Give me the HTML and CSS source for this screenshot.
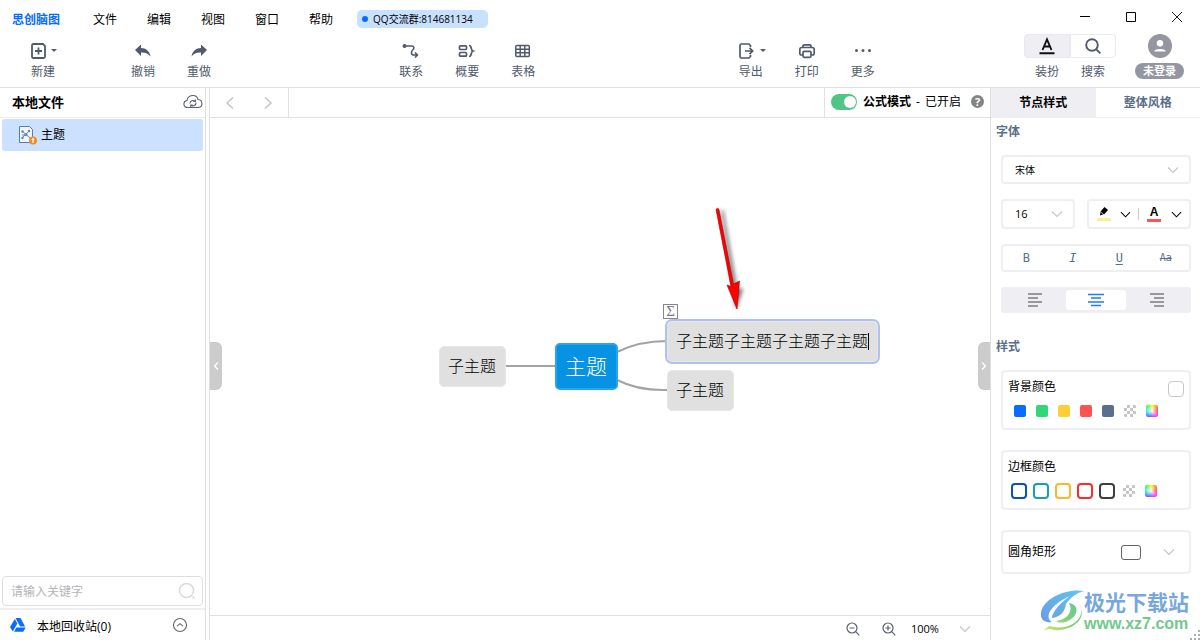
FILE: index.html
```html
<!DOCTYPE html>
<html lang="zh-CN">
<head>
<meta charset="utf-8">
<title>思创脑图</title>
<link rel="stylesheet" href="styles.css">
</head>
<body>
<svg class="defs" aria-hidden="true">
  <symbol id="chevron" viewBox="0 0 12 12"><path d="M1 3.5l5 5 5-5" fill="none" stroke="currentColor" stroke-width="1.1"/></symbol>
  <symbol id="checker" viewBox="0 0 12 12"><path d="M3 0h3v3h-3zM9 0h2l1 1v2h-3zM0 3h3v3h-3zM6 3h3v3h-3zM3 6h3v3h-3zM9 6h3v3h-3zM0 9h3v3h-2l-1-1zM6 9h3v3h-3z" fill="#c6c6c6"/></symbol>
</svg>
<header class="header">
  <nav class="menubar">
    <strong class="brand">思创脑图</strong>
    <div class="menus">
      <button>文件</button><button>编辑</button><button>视图</button><button>窗口</button><button>帮助</button>
    </div>
    <span class="chip">QQ交流群:814681134</span>
    <div class="window-controls">
      <button aria-label="最小化"><svg width="12" height="12" viewBox="0 0 12 12"><path d="M1 5.500h10" stroke="#000"/></svg></button>
      <button aria-label="最大化"><svg width="12" height="12" viewBox="0 0 12 12"><path d="M1.500 1.500h9v9h-9z" fill="none" stroke="#000"/></svg></button>
      <button aria-label="关闭"><svg width="12" height="12" viewBox="0 0 12 12"><path d="M1 1l10 10M11 1L1 11" fill="none" stroke="#222"/></svg></button>
    </div>
  </nav>
  <div class="toolbar">
    <div class="group">
      <button class="tool"><span class="tool-icon shifted"><svg width="16" height="18" viewBox="0 0 16 18" fill="none" stroke="currentColor" stroke-width="1.800"><path d="M2.500 2h9.500l2 2v10.500q0 1.500-1.500 1.500h-10q-1.500 0-1.500-1.500v-11q0-1.500 1.500-1.500zM7.500 5.500v7M4 9h7" /></svg><svg width="8" height="12" viewBox="0 0 8 12"><path d="M1 4h6l-3 3z" fill="currentColor"/></svg></span>新建</button>
    </div>
    <div class="group">
      <button class="tool"><span class="tool-icon"><svg width="18" height="16" viewBox="0 0 18 16"><path d="M1 7l6-5.500v3.500c5 0 8.500 3 9.500 8.500-2.500-3.300-5-4.200-9.500-4v3.500z" fill="currentColor"/></svg></span>撤销</button>
      <button class="tool"><span class="tool-icon"><svg width="18" height="16" viewBox="0 0 18 16"><path d="M17 7l-6-5.500v3.500c-5 0-8.500 3-9.500 8.500 2.500-3.300 5-4.200 9.500-4v3.500z" fill="currentColor"/></svg></span>重做</button>
    </div>
    <div class="space-a"></div>
    <div class="group">
      <button class="tool"><span class="tool-icon"><svg width="18" height="16" viewBox="0 0 18 16" fill="none" stroke="currentColor" stroke-width="1.600"><circle cx="2.500" cy="3" r="1.200" fill="currentColor"/><path d="M2.500 3h7c3 0 3 2.500 1.200 4s-1.800 5 1.200 5h3.600M13 9.500l2.500 2.500-2.500 2.500"/></svg></span>联系</button>
      <button class="tool"><span class="tool-icon"><svg width="18" height="16" viewBox="0 0 18 16" fill="none" stroke="currentColor" stroke-width="1.700"><rect x="1.500" y="2.800" width="7" height="3.700" rx="1"/><rect x="1.500" y="9.500" width="7" height="3.700" rx="1"/><path d="M11 2.500c3.500 0 1 4.500 4 5.500-3 1-.5 5.500-4 5.500"/></svg></span>概要</button>
      <button class="tool"><span class="tool-icon"><svg width="18" height="16" viewBox="0 0 18 16" fill="none" stroke="currentColor" stroke-width="1.500"><rect x="1.800" y="2.500" width="13.500" height="11" rx="1"/><path d="M6.200 2.500v11M10.800 2.500v11M1.800 6.200h13.500M1.800 9.800h13.500"/></svg></span>表格</button>
    </div>
    <div class="space-b"></div>
    <div class="group">
      <button class="tool"><span class="tool-icon shifted"><svg width="17" height="18" viewBox="1 0 17 18" fill="none" stroke="currentColor" stroke-width="1.700"><path d="M12.500 5v-1.500l-1.500-1.500h-7.500q-1.500 0-1.500 1.500v11q0 1.500 1.500 1.500h7.500l1.500-1.500v-1.500M7 9h7.500M11.500 5.800l3.200 3.200-3.200 3.200"/></svg><svg width="8" height="12" viewBox="0 0 8 12"><path d="M1 4h6l-3 3z" fill="currentColor"/></svg></span>导出</button>
      <button class="tool"><span class="tool-icon"><svg width="18" height="18" viewBox="0 0 18 18" fill="none" stroke="currentColor" stroke-width="1.700"><path d="M5 5.500v-1.500q0-1.200 1.200-1.200h5.600q1.200 0 1.200 1.200v1.500M5 13h-1.500q-1.700 0-1.700-1.700v-3.500q0-2.300 2-2.300h10.400q2 0 2 2.300v3.500q0 1.700-1.700 1.700h-1.500"/><rect x="5" y="9.300" width="8" height="6" rx="1.200"/></svg></span>打印</button>
      <button class="tool"><span class="tool-icon"><svg width="18" height="16" viewBox="0 0 18 16" fill="currentColor"><circle cx="2.500" cy="7.500" r="1.500"/><circle cx="9" cy="7.500" r="1.500"/><circle cx="15.500" cy="7.500" r="1.500"/></svg></span>更多</button>
    </div>
    <div class="space-c"></div>
    <div class="group pair">
      <button class="tool segment"><span class="segment-icon filled"><svg width="18" height="18" viewBox="0 0 18 18" fill="none" stroke="#111" stroke-width="1.900"><path d="M4.500 13l4.500-10.500 4.500 10.500M6 9.500h6M1.500 16.300h15"/></svg></span>装扮</button>
      <button class="tool segment"><span class="segment-icon"><svg width="18" height="18" viewBox="0 0 18 18" fill="none" stroke="currentColor" stroke-width="1.900"><circle cx="8" cy="8" r="5.800"/><path d="M12.300 12.300l4 4"/></svg></span>搜索</button>
    </div>
    <button class="account"><svg width="24" height="24" viewBox="0 0 24 24"><circle cx="12" cy="12" r="12" fill="#9496a2"/><circle cx="12" cy="9.200" r="3.200" fill="#fff"/><path d="M6 17.500c1-3.300 11-3.300 12 0z" fill="#fff"/></svg><span>未登录</span></button>
  </div>
</header>
<main class="workspace">
  <aside class="sidebar">
    <div class="side-head"><h2>本地文件</h2><button aria-label="同步"><svg width="20" height="16" viewBox="0 0 20 16" fill="none" stroke="#596171" stroke-width="1.100"><path d="M5 13.500c-5 0-5.500-6-1-7 .8-6 9.500-7 11-1 5.500.5 5 8 0 8z"/><path d="M7 9.500a3 3 0 0 1 5-2.200M13 8.500a3 3 0 0 1-5 2.500M12.300 5.500v2h-2M7.700 13v-2h2"/></svg></button></div>
    <button class="file"><svg width="20" height="20" viewBox="0 0 20 20"><path d="M1.500 1.500h10l3 3v13h-13z" fill="#eef5ff" stroke="#5a7ca8"/><path d="M4 6l8 7M4 13l7-7M4 10h4" stroke="#6686ae" fill="none"/><g fill="#6686ae"><circle cx="4.500" cy="6.500" r="1.200"/><circle cx="11" cy="6" r="1.200"/><circle cx="4.500" cy="13" r="1.200"/><circle cx="8" cy="9.500" r="1.500"/></g><circle cx="15" cy="15.500" r="4" fill="#f58a1f"/><path d="M15 12.500l1.700 2.600h-1v2.700h-1.400v-2.700h-1z" fill="#fff"/></svg>主题</button>
    <label class="search"><input type="text" placeholder="请输入关键字" aria-label="搜索文件"><svg width="18" height="18" viewBox="0 0 18 18" fill="none" stroke="#d9d9d9" stroke-width="1.500"><circle cx="8.500" cy="8.500" r="7"/><path d="M14.500 14.500l2 2"/></svg></label>
    <button class="trash"><svg width="18" height="16" viewBox="0 0 18 16" fill="#0a6cff"><path d="M6.500 1h5l4.600 8.500h-5z"/><path d="M5.800 2l2.600 4.400-4.600 8.100-2.800-4.500z"/><path d="M7.400 10.500h9.300l-2.400 4.300h-9.200z"/></svg><span>本地回收站(0)</span><svg width="16" height="16" viewBox="0 0 16 16" fill="none" stroke="#666" stroke-width="1.100"><circle cx="8" cy="8" r="6.500"/><path d="M5 9.200l3-2.500 3 2.500"/></svg></button>
  </aside>
  <section class="editor">
    <div class="editor-bar">
      <div class="history">
        <button aria-label="后退"><svg width="12" height="14" viewBox="0 0 12 14"><path d="M9 1.500l-6 5.500 6 5.500" fill="none" stroke="#c3c3c8" stroke-width="1.500"/></svg></button>
        <button aria-label="前进"><svg width="12" height="14" viewBox="0 0 12 14"><path d="M3 1.500l6 5.500-6 5.500" fill="none" stroke="#c3c3c8" stroke-width="1.500"/></svg></button>
      </div>
      <div class="formula">
        <input type="checkbox" id="formula" class="switch" checked><label for="formula"><b>公式模式</b><span>-</span><span>已开启</span></label>
        <button class="help" aria-label="说明">?</button>
      </div>
    </div>
    <div class="canvas">
      <svg class="links" width="780" height="497" viewBox="0 0 780 497" fill="none">
        <g stroke="#a3a3a3" stroke-width="2"><path d="M295 248h51M407 234q22-11 50-11M407 262q22 11 50 10"/></g>
        <path d="M511 94l14 92 1 6 7-22-6 1-14-80z" fill="#000" opacity=".6" class="arrow-shadow"/>
        <path d="M506 91.500q1.500-2.500 3 0l14.500 74.500 6-3-2.500 28-10-24 4 1.500z" fill="#fd0000" stroke="#a40000" stroke-width=".6"/>
      </svg>
      <div class="node node-left">子主题</div>
      <div class="node node-root">主题</div>
      <div class="node node-active">子主题子主题子主题子主题</div>
      <div class="node node-right">子主题</div>
      <span class="sigma">Σ</span>
      <button class="handle handle-left" aria-label="收起左侧"><svg width="6" height="10" viewBox="0 0 6 10"><path d="M5 1.500l-3.500 3.500 3.500 3.500" fill="none" stroke="#fff" stroke-width="1.300"/></svg></button>
      <button class="handle handle-right" aria-label="收起右侧"><svg width="6" height="10" viewBox="0 0 6 10"><path d="M1 1.500l3.500 3.500-3.500 3.500" fill="none" stroke="#fff" stroke-width="1.300"/></svg></button>
    </div>
    <footer class="status">
      <button aria-label="缩小"><svg width="14" height="14" viewBox="0 0 14 14" fill="none" stroke="#5a6072" stroke-width="1.200"><circle cx="6" cy="6" r="5"/><path d="M9.700 9.700l3.600 3.600M3.500 6h5"/></svg></button>
      <button aria-label="放大"><svg width="14" height="14" viewBox="0 0 14 14" fill="none" stroke="#5a6072" stroke-width="1.200"><circle cx="6" cy="6" r="5"/><path d="M9.700 9.700l3.600 3.600M3.500 6h5M6 3.500v5"/></svg></button>
      <div class="zoom select-wrap"><select aria-label="缩放比例"><option>100%</option></select><svg class="chev" width="12" height="12"><use href="#chevron"/></svg></div>
    </footer>
  </section>
  <aside class="panel">
    <div class="tabs"><button class="active">节点样式</button><button>整体风格</button></div>
    <section class="block">
      <h3>字体</h3>
      <div class="stack">
        <div class="box select-wrap family"><select aria-label="字体"><option>宋体</option></select><svg class="chev" width="12" height="12"><use href="#chevron"/></svg></div>
        <div class="row">
          <div class="box select-wrap size"><select aria-label="字号"><option>16</option></select><svg class="chev" width="12" height="12"><use href="#chevron"/></svg></div>
          <div class="box colors">
            <button aria-label="填充颜色"><svg width="14" height="16" viewBox="0 0 14 16"><path d="M7.500 1l3.500 3-4 4.500-3.500-3zM3.500 6l2.500 2.500-3 1z" fill="#000"/><path d="M0 12h14v3H0z" fill="#ffee95"/></svg></button>
            <button aria-label="选择填充颜色"><svg width="11" height="11"><use href="#chevron"/></svg></button>
            <i class="split"></i>
            <button class="letter" aria-label="文字颜色">A</button>
            <button class="pick" aria-label="选择文字颜色"><svg width="11" height="11"><use href="#chevron"/></svg></button>
          </div>
        </div>
        <div class="box format"><button>B</button><button class="italic">I</button><button class="under">U</button><button class="strike">Aa</button></div>
        <div class="align">
          <button aria-label="左对齐"><svg width="14" height="14" viewBox="0 0 14 14"><path d="M0 1h14M0 5h10M0 9h14M0 13h10" stroke="#7d7d80" stroke-width="1.600"/></svg></button>
          <button class="active" aria-label="居中"><svg width="16" height="14" viewBox="0 0 16 14"><path d="M0 1.500h16M3 5h10M0 9h16M3 12.500h10" stroke="#2479f6" stroke-width="1.500"/></svg></button>
          <button aria-label="右对齐"><svg width="14" height="14" viewBox="0 0 14 14"><path d="M0 1h14M4 5h10M0 9h14M4 13h10" stroke="#7d7d80" stroke-width="1.600"/></svg></button>
        </div>
      </div>
    </section>
    <section class="block styles">
      <h3>样式</h3>
      <div class="stack cards">
        <div class="box card">
          <div class="card-head"><span>背景颜色</span><input type="checkbox" aria-label="背景颜色"></div>
          <div class="swatches solid"><button class="blue" aria-label="蓝色"></button><button class="green" aria-label="绿色"></button><button class="yellow" aria-label="黄色"></button><button class="red" aria-label="红色"></button><button class="slate" aria-label="灰蓝"></button><button aria-label="透明"><svg width="12" height="12"><use href="#checker"/></svg></button><button class="rainbow" aria-label="更多颜色"></button></div>
        </div>
        <div class="box card">
          <div class="card-head"><span>边框颜色</span></div>
          <div class="swatches outline"><button class="ring navy" aria-label="深蓝"></button><button class="ring teal" aria-label="青色"></button><button class="ring amber" aria-label="橙黄"></button><button class="ring crimson" aria-label="红色"></button><button class="ring dark" aria-label="黑色"></button><button class="plain" aria-label="透明"><svg width="12" height="12"><use href="#checker"/></svg></button><button class="plain rainbow" aria-label="更多颜色"></button></div>
        </div>
        <div class="box shape select-wrap"><select aria-label="形状"><option>圆角矩形</option></select><i class="shape-icon"></i><svg class="chev" width="12" height="12"><use href="#chevron"/></svg></div>
      </div>
    </section>
  </aside>
</main>
<div class="watermark">
  <svg width="44" height="42" viewBox="0 0 44 42"><defs><linearGradient id="wa" x1="0" y1="1" x2="1" y2="0"><stop offset="0" stop-color="#6b9be6"/><stop offset="1" stop-color="#60c6ee"/></linearGradient><linearGradient id="wb" x1="0" y1="1" x2="1" y2="0"><stop offset="0" stop-color="#d7e36b"/><stop offset=".5" stop-color="#83cf7c"/><stop offset="1" stop-color="#62c796"/></linearGradient></defs><path d="M44 1C27-2 3 8 1 23c-1 8 6 10 11 9-10-6 3-20 18-26-9 6-18 16-18 22 8-1 13-6 14-14 4-6 10-11 18-13z" fill="url(#wa)"/><path d="M39 14c6 7 1 20-15 23-7 1-11 0-14-1-3 1-5 3-6 5 4-3 7-2 10-1 17 2 35-11 25-26zM29 13c5 9-3 17-13 18 5 4 17 0 20-8 2-6-2-9-7-10z" fill="url(#wb)"/></svg>
  <div><strong>极光下载站</strong><span>www.xz7.com</span></div>
</div>
<svg class="grip" width="10" height="10" viewBox="0 0 10 10" fill="#a6adbb"><path d="M8 0h2v2h-2zM4 4h2v2h-2zM8 4h2v2h-2zM0 8h2v2h-2zM4 8h2v2h-2zM8 8h2v2h-2z"/></svg>
</body>
</html>
```

FILE: styles.css
```css
* { box-sizing: border-box; }
body {
  margin: 0;
  min-height: 100vh;
  display: flex;
  flex-direction: column;
  position: relative;
  background: #fff;
  color: #000;
  font: 12px/16px "Open Sans", "Noto Sans CJK SC", sans-serif;
}
button, select, input { font: inherit; color: inherit; margin: 0; }
button { border: 0; padding: 0; background: none; white-space: nowrap; }
svg { display: block; flex: none; }
h2, h3 { margin: 0; }
.defs { position: absolute; width: 0; height: 0; }

.header { border-bottom: 1px solid #e0e0e0; }
.menubar { display: flex; align-items: center; height: 38px; padding: 0 17px 0 12px; }
.brand { color: #0a6cff; margin: 2px 33px 0 0; }
.menus { display: flex; gap: 30px; margin-right: 24px; padding-top: 2px; }
.chip {
  display: flex; align-items: center; height: 18px; padding: 0 15px 0 5px; gap: 5px;
  border-radius: 5px; background: #c7e1ff; font-size: 10px; white-space: nowrap;
}
.chip::before { content: ""; width: 6px; height: 6px; border-radius: 50%; background: #0a6cff; }
.window-controls { display: flex; gap: 34px; margin-left: auto; padding-bottom: 4px; }

.toolbar { display: flex; align-items: flex-start; height: 49px; padding: 0 16px 0 15px; color: #515a6b; }
.group { display: flex; }
.group + .group { margin-left: 44px; }
.tool { display: flex; flex-direction: column; align-items: center; width: 56px; }
.tool-icon { display: flex; align-items: center; width: 24px; height: 26px; padding-left: 3px; }
.tool-icon.shifted { padding-left: 0; gap: 3px; }
.space-a { flex: 156; }
.space-b { flex: 171; }
.space-c { flex: 133; }
.segment { width: 46px; }
.segment-icon {
  display: flex; align-items: center; justify-content: center; width: 46px; height: 24px;
  margin: -4px 0 6px; border: 1px solid #e9e9ee; border-radius: 0 4px 4px 0;
}
.segment-icon.filled { background: #eeeef3; border-radius: 4px 0 0 4px; }
.account { display: flex; flex-direction: column; align-items: center; gap: 5px; margin: -4px 0 0 19px; }
.account span { padding: 0 8px; border-radius: 8px; background: #9496a2; color: #fff; font-size: 11px; font-weight: 600; }

.workspace { flex: 1; display: flex; min-height: 0; }
.sidebar { width: 206px; flex: none; display: flex; flex-direction: column; border-right: 1px solid #e0e0e0; }
.side-head {
  display: flex; align-items: center; justify-content: space-between; height: 30px;
  padding: 0 2px 2px 12px; border-bottom: 1px solid #eee;
}
.side-head h2 { font-size: 13px; line-height: 16px; }
.file {
  display: flex; align-items: center; gap: 3px; height: 32px; margin: 1px 2px; padding-left: 16px;
  border-radius: 3px; background: #cce0ff;
}
.search {
  display: flex; align-items: center; height: 30px; margin: auto 2px 2px; padding: 0 6px 0 8px;
  border: 1px solid #dedede; border-radius: 4px;
}
.search input { flex: 1; min-width: 0; padding: 2px 0 0; border: 0; outline: 0; background: none; }
.search input::placeholder { color: #b4b4b8; }
.trash {
  display: flex; align-items: center; gap: 10px; height: 32px; padding: 0 17px 0 9px;
  border-top: 2px solid #eeeef3;
}
.trash span { flex: 1; text-align: left; padding-top: 3px; }

.editor { flex: 1; min-width: 0; display: flex; flex-direction: column; margin-left: 3px; border-left: 1px solid #e0e0e0; }
.editor-bar { display: flex; justify-content: space-between; height: 30px; border-bottom: 1px solid #e0e0e0; }
.history { display: flex; align-items: center; gap: 26px; padding: 0 14px; border-right: 1px solid #e0e0e0; }
.formula { display: flex; align-items: center; padding: 0 6px 2px; border-left: 1px solid #e0e0e0; }
.formula label { display: flex; gap: 5px; margin: 0 10px 0 6px; white-space: nowrap; }
.switch { appearance: none; position: relative; width: 26px; height: 16px; border-radius: 8px; background: #51c585; }
.switch::after { content: ""; position: absolute; top: 2px; right: 1px; width: 12px; height: 12px; border-radius: 50%; background: #fff; }
.help { width: 13px; height: 13px; border-radius: 50%; background: #838383; color: #fff; font-size: 11px; line-height: 13px; font-weight: 700; text-align: center; }

.canvas { position: relative; flex: 1; min-height: 480px; overflow: hidden; font-family: "Noto Sans CJK SC", sans-serif; }
.links { position: absolute; left: 0; top: 0; }
.arrow-shadow { filter: blur(2px); }
.node {
  position: absolute; height: 41px; padding: 0 9px 0 8px; border: 1px solid #e7e7e7; border-radius: 5px;
  background: #e0e0e0; font-size: 16px; line-height: 36px; font-weight: 300; white-space: nowrap;
}
.node-left { left: 229px; top: 228px; }
.node-root {
  left: 345px; top: 225px; height: 47px; border: 2px solid #2ba3e6; background: #0693e3;
  color: #fff; font-size: 21px; line-height: 40px;
}
.node-active { left: 457px; top: 203px; padding-right: 8px; outline: 2px solid #b2bff7; outline-offset: 0; }
.node-active::after { content: ""; display: inline-block; width: 1px; height: 17px; background: #000; vertical-align: -3px; }
.node-right { left: 457px; top: 252px; }
.sigma {
  position: absolute; left: 453px; top: 186px; width: 15px; height: 15px; border: 1px solid #868692;
  color: #777783; font: 15px/13px "Liberation Serif", serif; text-align: center; background: #fff;
}
.handle { position: absolute; top: 224px; width: 12px; height: 48px; background: #ccc; display: flex; align-items: center; justify-content: center; }
.handle-left { left: 0; border-radius: 0 6px 6px 0; }
.handle-right { right: 0; border-radius: 6px 0 0 6px; }

.status { display: flex; align-items: center; justify-content: flex-end; gap: 22px; height: 25px; padding: 1px 19px 0 0; border-top: 1px solid #e0e0e0; }
.zoom { width: 60px; margin-left: -7px; font-size: 11px; }

.select-wrap { position: relative; display: flex; align-items: center; }
.select-wrap select { appearance: none; width: 100%; height: 100%; padding: 0; border: 0; outline: 0; background: none; }
.chev { position: absolute; right: 10px; color: #c5c5ca; pointer-events: none; }
.zoom .chev { right: 0; }

.panel { width: 210px; flex: none; border-left: 1px solid #e0e0e0; }
.tabs { display: flex; height: 30px; border-bottom: 1px solid #eeeef3; }
.tabs button { flex: 1; font-weight: 600; color: #5b6f8b; }
.tabs .active { background: #eeeef3; color: #000; }
.block h3 { padding: 6px 5px 0; font-size: 12px; line-height: 16px; font-weight: 600; color: #5b6f8b; }
.stack { display: flex; flex-direction: column; gap: 15px; padding: 15px 9px 0 10px; }
.box { border: 2px solid #eeeef3; border-radius: 4px; background: #fff; }
.family, .size { padding-left: 12px; font-size: 11px; }
.family { height: 29px; font-size: 10px; }
.row { display: flex; gap: 12px; }
.size { width: 74px; height: 30px; }
.colors { flex: 1; display: flex; align-items: center; gap: 9px; padding-left: 8px; height: 30px; }
.colors .split { margin: 0 -1px 0 -2px; }
.pick { margin-left: 1px; }
.split { width: 1px; height: 12px; background: #ccc; }
.letter { width: 14px; height: 15px; padding-bottom: 2px; border-bottom: 3px solid #ff5252; font: bold 12px/10px "Liberation Sans", sans-serif; }
.format { display: grid; grid-template-columns: repeat(4, 1fr); height: 28px; color: #5b7090; font-family: "DejaVu Sans Mono", monospace; }
.italic { font-style: italic; }
.under { text-decoration: underline; text-underline-offset: 2px; }
.strike { font-size: 10px; text-decoration: line-through; }
.align { display: flex; height: 26px; padding: 3px 4px; border-radius: 3px; background: #eeeef3; }
.align button { flex: 1; display: flex; align-items: center; justify-content: center; }
.align .active { border-radius: 3px; background: #fff; }
.styles { padding-top: 20px; }
.cards { gap: 20px; }
.card { height: 60px; padding: 5px 5px 0; }
.card-head { display: flex; justify-content: space-between; height: 24px; line-height: 19px; }
.card-head input { appearance: none; width: 16px; height: 16px; margin-top: 4px; border: 1px solid #c8c8cc; border-radius: 4px; }
.swatches { display: flex; align-items: center; }
.swatches button { width: 12px; height: 12px; border-radius: 2px; }
.solid { gap: 10px; padding: 4px 0 0 6px; }
.outline { gap: 6px; padding: 2px 0 0 3px; }
.swatches .ring { width: 16px; height: 16px; border: 2px solid; border-radius: 4px; }
.swatches .plain { margin: 0 2px; }
.blue { background: #0a6cff; }
.green { background: #30d878; }
.yellow { background: #ffce35; }
.red { background: #ff5353; }
.slate { background: #5a6f8a; }
.swatches .navy { border-color: #0750bf; }
.swatches .teal { border-color: #18a2a5; }
.swatches .amber { border-color: #ffb629; }
.swatches .crimson { border-color: #fb2c2c; }
.swatches .dark { border-color: #3f3f3f; }
.rainbow { background: radial-gradient(#fff 0, rgba(255,255,255,0) 75%), conic-gradient(from 0deg, #ff0, #ff4040 80deg, #f4f 135deg, #74f 190deg, #3af 235deg, #2fd 285deg, #4f4 320deg, #ff0); }
.shape { height: 44px; padding-left: 5px; }
.shape-icon { position: absolute; right: 48px; width: 20px; height: 15px; border: 1px solid #626262; border-radius: 3px; pointer-events: none; }
.shape .chev { right: 14px; }

.watermark { position: absolute; right: 11px; bottom: 7px; display: flex; pointer-events: none; }
.watermark div { display: flex; flex-direction: column; }
.watermark strong { font-size: 21px; line-height: 24px; color: #76a8db; }
.watermark span { font: bold 16px/19px "Liberation Sans", sans-serif; color: #70c98d; }
.grip { position: absolute; right: 0; bottom: 0; }
```
